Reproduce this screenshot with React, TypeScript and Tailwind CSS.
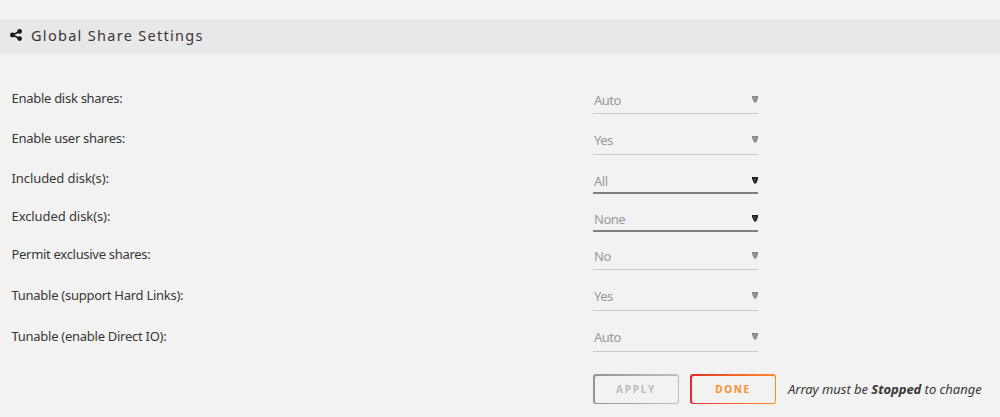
import { clsx } from "clsx";

type Setting = {
  label: string;
  value: string;
  row: string;
  labelClass: string;
  valuePad: string;
  active?: boolean;
};

const settings: Setting[] = [
  { label: "Enable disk shares:", value: "Auto", row: "h-[41px]", labelClass: "pb-1.5 tracking-[-0.28px]", valuePad: "pb-[3px]" },
  { label: "Enable user shares:", value: "Yes", row: "h-[41px]", labelClass: "pb-[7px] tracking-[-0.28px]", valuePad: "pb-1" },
  { label: "Included disk(s):", value: "All", row: "h-[39px]", labelClass: "pb-1.5 tracking-[-0.08px]", valuePad: "pb-px", active: true },
  { label: "Excluded disk(s):", value: "None", row: "h-[38px]", labelClass: "pb-1.5 tracking-[-0.08px]", valuePad: "pb-px", active: true },
  { label: "Permit exclusive shares:", value: "No", row: "h-[38px]", labelClass: "pb-1.5 tracking-[-0.3px]", valuePad: "pb-[3px]" },
  { label: "Tunable (support Hard Links):", value: "Yes", row: "h-[41px]", labelClass: "pb-1.5 tracking-[-0.27px]", valuePad: "pb-1" },
  { label: "Tunable (enable Direct IO):", value: "Auto", row: "h-[41px]", labelClass: "pb-1.5 tracking-[-0.27px]", valuePad: "pb-1" },
];

function ShareIcon() {
  return (
    <svg viewBox="0 0 12 12" className="h-3 w-3 shrink-0 text-[#1c1b1b]" fill="currentColor">
      <circle cx="2.4" cy="6" r="2.4" />
      <circle cx="9.6" cy="2.4" r="2.4" />
      <circle cx="9.6" cy="9.6" r="2.4" />
      <path d="M9.6 2.4 2.4 6l7.2 3.6" fill="none" stroke="currentColor" strokeWidth="1.7" />
    </svg>
  );
}

function Arrow({ active }: { active?: boolean }) {
  return (
    <svg viewBox="0 0 6 7" className={clsx("mb-px h-[7px] w-1.5", active ? "text-[#1c1b1b]" : "text-[#858585]")}>
      <path d="M0 0h6v2L4.2 6.5H2.2L0 2z" fill="currentColor" />
      <path d="M1.6 1 2.6 4.5M3.6 1v2.5" stroke="#f2f2f2" strokeWidth="0.5" opacity="0.5" />
    </svg>
  );
}

function SettingRow({ label, value, row, labelClass, valuePad, active }: Setting) {
  return (
    <div className={clsx("flex items-end", row)}>
      <div className={clsx("w-[582px] whitespace-nowrap pl-[0.5px] text-[13px] leading-5", labelClass)}>{label}</div>
      <button
        type="button"
        className={clsx(
          "flex w-[165px] items-center justify-between pl-px text-left text-[13px] leading-5 tracking-[-0.5px] text-[#999999]",
          active ? "border-b-2 border-[#808080]" : "border-b border-[#c9c9c9]",
          valuePad,
        )}
      >
        <span>{value}</span>
        <Arrow active={active} />
      </button>
    </div>
  );
}

export default function App() {
  return (
    <div className="h-[417px] w-[1000px] overflow-hidden bg-[#f2f2f2] pt-[19px] font-['Noto_Sans',sans-serif] text-[#383735]">
      <header className="flex h-[35px] items-center gap-[9.5px] bg-[#e8e8e8] pb-[3px] pl-[9.5px]">
        <ShareIcon />
        <h1 className="whitespace-nowrap text-[14.5px] leading-5 tracking-[1.3px]">Global Share Settings</h1>
      </header>

      <main className="pl-[11px] pt-[19px]">
        {settings.map((setting) => (
          <SettingRow key={setting.label} {...setting} />
        ))}

        {/* Actions */}
        <div className="mt-[22px] flex items-center pl-[582px]">
          <button
            type="button"
            disabled
            className="h-[30px] w-[86px] rounded-[3px] bg-linear-to-r from-[#949494] to-[#c0c0c0] p-[1.5px]"
          >
            <span className="flex h-full items-center justify-center rounded-[2px] bg-[#f2f2f2] text-[10px] font-bold tracking-[1.8px] text-[#bcbcbc]">
              APPLY
            </span>
          </button>
          <button
            type="button"
            className="ml-[11px] h-[30px] w-[86px] rounded-[3px] bg-linear-to-r from-[#e22828] to-[#ff8c2f] p-[1.5px]"
          >
            <span className="flex h-full items-center justify-center rounded-[2px] bg-[#f2f2f2] text-[10px] font-bold tracking-[1.6px] text-[#ff8c2f]">
              DONE
            </span>
          </button>
          <p className="ml-3 whitespace-nowrap pb-px text-[13px] italic leading-5 tracking-[-0.04px]">
            Array must be <b>Stopped</b> to change
          </p>
        </div>
      </main>
    </div>
  );
}
